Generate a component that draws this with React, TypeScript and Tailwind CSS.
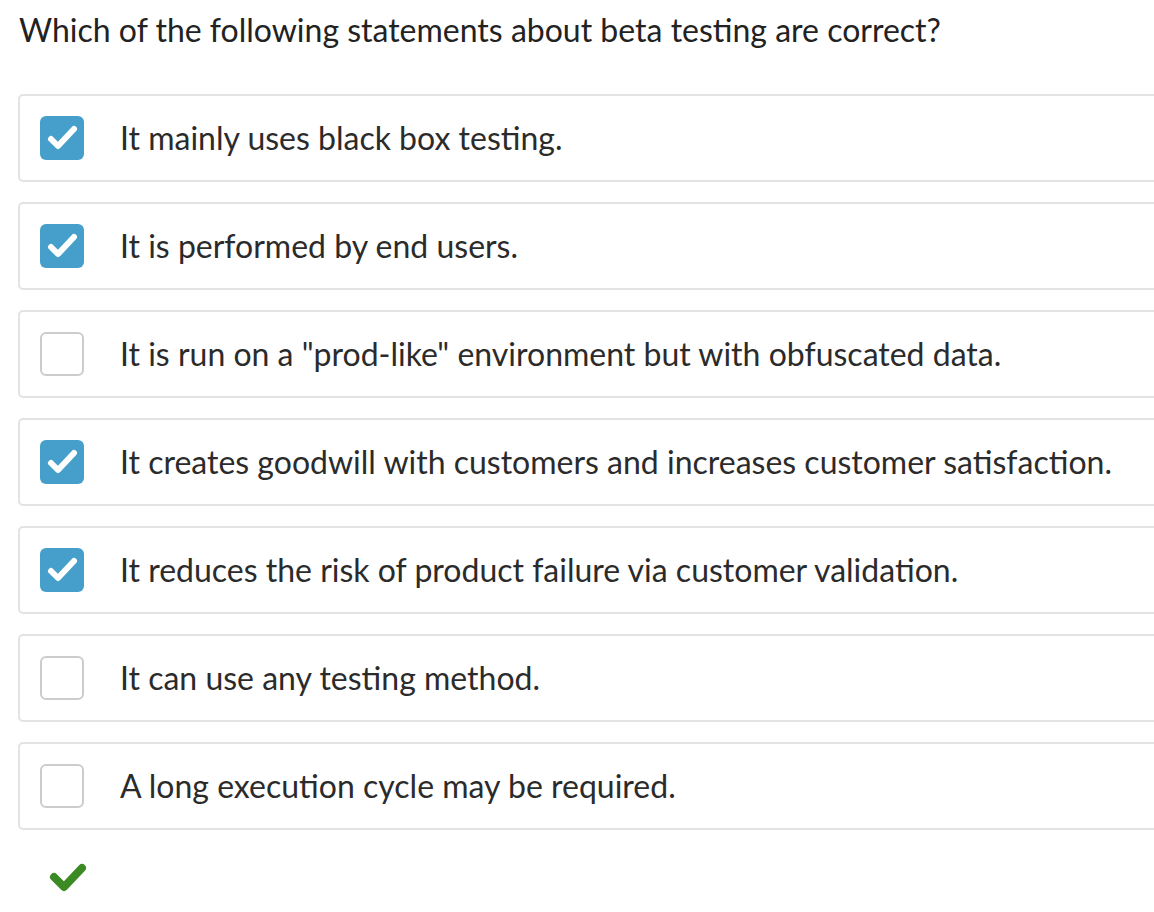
const OPTIONS = [
  { text: "It mainly uses black box testing.", checked: true },
  { text: "It is performed by end users.", checked: true },
  { text: 'It is run on a "prod-like" environment but with obfuscated data.', checked: false },
  { text: "It creates goodwill with customers and increases customer satisfaction.", checked: true },
  { text: "It reduces the risk of product failure via customer validation.", checked: true },
  { text: "It can use any testing method.", checked: false },
  { text: "A long execution cycle may be required.", checked: false },
]

function Box({ checked }: { checked: boolean }) {
  if (checked) {
    return (
      <div className="h-[44px] w-[44px] shrink-0 rounded-[6px] bg-[#459fca]">
        <svg width="44" height="44" viewBox="0 0 44 44">
          <polyline
            points="11,23 18,30 34,13"
            fill="none"
            stroke="#fff"
            strokeWidth="6"
            strokeLinecap="round"
            strokeLinejoin="round"
          />
        </svg>
      </div>
    )
  }
  return <div className="h-[44px] w-[44px] shrink-0 rounded-[6px] border-2 border-[#cccccc] bg-white" />
}

export default function App() {
  return (
    <div className="min-h-screen overflow-hidden bg-white font-['Lato','Noto_Sans',sans-serif] text-[#2b2b2b]">
      <h1 className="pl-[19px] pt-[10px] text-[32px] leading-[40px] font-normal text-[#222]">
        Which of the following statements about beta testing are correct?
      </h1>

      <ul className="mt-[44px] flex w-[1200px] flex-col gap-[20px] pl-[18px]">
        {OPTIONS.map((o) => (
          <li
            key={o.text}
            className="flex h-[88px] items-center gap-[36px] rounded-[5px] border-2 border-[#e3e3e3] pl-[20px]"
          >
            <Box checked={o.checked} />
            <span className="whitespace-nowrap text-[32px] leading-[40px]">{o.text}</span>
          </li>
        ))}
      </ul>

      <div className="ml-[48px] mt-[30px]">
        <svg width="40" height="34" viewBox="0 0 40 34">
          <polyline
            points="6,17 16,27 34,8"
            fill="none"
            stroke="#3b8a24"
            strokeWidth="8"
            strokeLinecap="round"
            strokeLinejoin="round"
          />
        </svg>
      </div>
    </div>
  )
}
